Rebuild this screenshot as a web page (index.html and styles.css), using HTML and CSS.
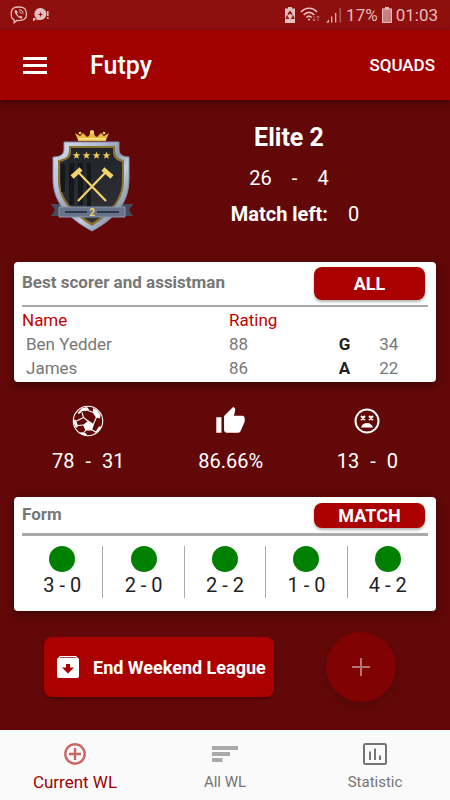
FILE: index.html
```html
<!DOCTYPE html>
<html lang="en">
<head>
    <meta charset="UTF-8">
    <meta name="viewport" content="width=device-width, initial-scale=1.0">
    <title>Futpy</title>
    <link rel="stylesheet" href="styles.css">
</head>
<body>
    <div class="statusbar">
        <div class="status-group">
            <svg width="18" height="18" viewBox="0 0 18 18" fill="none" stroke="currentColor" stroke-width="1.3">
                <path d="M9 1C4 1 1.2 2.2 1.2 8c0 3 .8 5 3 6v2.800l2.400-2.300C14 15 16.500 13 16.500 8 16.500 2.500 14 1 9 1z"/>
                <path d="M5 4.200c-1 1 0 3 1.500 5s4 4 5.500 3.200l.6-1.300-1.900-1.400-1 .9C8.500 10 7.200 8.500 7 7.500l.8-.9L6.300 4z" fill="currentColor" stroke="none"/>
                <path d="M9 3.800c2.800 0 4 1.500 4 4M9 5.800c1.500 0 2 .8 2 2" stroke-width="1"/>
            </svg>
            <svg width="18" height="18" viewBox="0 0 18 18" fill="currentColor">
                <path fill-rule="evenodd" d="M8.500 2a6 6 0 1 1 0 12H4.500v-1.500A6 6 0 0 1 8.500 2zM8 6.500V8H6.500v1H8v1.500h1V9h1.500V8H9V6.500z"/>
                <path d="M1 12h2.500v1.500L2 15H1zM15 5h1.600v5H15zM15 11.200h1.600V13H15z"/>
            </svg>
        </div>
        <div class="status-group">
            <svg width="12" height="16" viewBox="0 0 12 16">
                <path fill="currentColor" d="M4 0h4v1.500h3V16H1V1.500h3z"/>
                <path d="M4 7.500L6 4.800l2 2.700M8.700 8.500l1 2.800H7M5 11.300H2.500l1-2.800" fill="none" stroke="#8f0e0e" stroke-width="1.4"/>
            </svg>
            <svg width="22" height="16" viewBox="0 0 22 16" fill="none" stroke="currentColor">
                <path d="M1 5C5.500 0 12.500 0 17 5M3.700 8C7 4.500 11 4.500 14.300 8M6.300 10.500C8 8.800 10 8.800 11.700 10.500" stroke-width="1.700"/>
                <circle cx="9" cy="12.500" r="1.100" fill="currentColor" stroke="none"/>
                <path d="M14 9v5M12.500 12.500L14 14l1.500-1.500M18 14V9M16.500 10.500L18 9l1.500 1.500" opacity=".5"/>
            </svg>
            <svg width="16" height="16" viewBox="0 0 16 16" fill="currentColor">
                <path d="M0 15.500l3-3v3zM5 9.500h1.300v6H5zM9 6h1.300v9.500H9z"/>
                <path d="M13.500 1h1.300v14.500h-1.300z" opacity=".5"/>
            </svg>
            <span>17%</span>
            <svg width="10" height="16" viewBox="0 0 10 16" fill="currentColor">
                <path d="M3 0h4v2H3z"/>
                <path d="M0 1.500h10V16H0z" opacity=".65"/>
                <path d="M.5 2h9v13.500h-9z" fill="none" stroke="currentColor"/>
            </svg>
            <span>01:03</span>
        </div>
    </div>

    <header class="appbar">
        <button class="menu-btn" aria-label="Menu">
            <svg width="24" height="17" viewBox="0 0 24 17" fill="currentColor">
                <path d="M0 0h24v3H0zM0 7h24v3H0zM0 14h24v3H0z"/>
            </svg>
        </button>
        <h1>Futpy</h1>
        <a class="squads" href="#">SQUADS</a>
    </header>

    <main>
        <section class="hero">
            <svg class="badge" width="82" height="102" viewBox="0 0 82 102">
                <defs>
                    <linearGradient id="steel" x1="0" y1="0" x2="1" y2="1">
                        <stop offset="0" stop-color="#d6dfee"/>
                        <stop offset=".3" stop-color="#b4c0d6"/>
                        <stop offset=".5" stop-color="#8f9cb4"/>
                        <stop offset=".62" stop-color="#c3cee0"/>
                        <stop offset="1" stop-color="#5a677e"/>
                    </linearGradient>
                    <linearGradient id="dark" x1="0" y1="0" x2="0" y2="1">
                        <stop offset="0" stop-color="#20232a"/>
                        <stop offset="1" stop-color="#303236"/>
                    </linearGradient>
                    <linearGradient id="gold" x1="0" y1="0" x2="0" y2="1">
                        <stop offset="0" stop-color="#fff0a0"/>
                        <stop offset="1" stop-color="#dfb038"/>
                    </linearGradient>
                </defs>
                <path d="M0 74h11v12H0l4-6zM82 74H71v12h11l-4-6z" fill="#454d5c"/>
                <path d="M13 12h55v7c0 5 3 8 10 8v22c0 25-15 40-37 52C19 89 2 74 2 49V27c8 0 11-3 11-8z" fill="url(#steel)" stroke="#8290a8"/>
                <path d="M18 16h46v4c0 6 3 9 9 10v20c0 21-13 34-32 46C22 84 7 71 7 50V30c8-1 11-4 11-10z" fill="#8d7330"/>
                <path d="M20 18h42v4c0 6 3 8 9 10v18c0 20-12 32-30 43C23 82 9 70 9 50V32c8-2 11-5 11-10z" fill="url(#dark)"/>
                <path d="M9 33h62M10 34h4v28h-4zM18 33h5v42h-5zM27 33h5v42h-5zM36 33h4v46h-4z" fill="#15171d"/>
                <path d="M27 10L24 3l5 3 3-3 4 4 2-1 2-5h2l2 5 2 1 4-4 3 3 5-3-3 7z" fill="#e7ba45"/>
                <path d="M27 8h28v3H27z" fill="url(#gold)"/>
                <circle cx="41" cy="2" r="2" fill="#f8d866"/>
                <circle cx="29" cy="3" r="1.300" fill="#f8d866"/>
                <circle cx="53" cy="3" r="1.300" fill="#f8d866"/>
                <g fill="#efcd5c">
                    <path id="star" d="M25.500 21.500l1 2.700 2.800.1-2.200 1.800.8 2.700-2.400-1.600-2.400 1.600.8-2.700-2.200-1.800 2.800-.1z"/>
                    <use href="#star" x="10"/>
                    <use href="#star" x="20"/>
                    <use href="#star" x="30"/>
                </g>
                <g stroke="#f2d56c" fill="none">
                    <path d="M27 42l28 29M55 42L27 71" stroke-width="2.200"/>
                    <path d="M21 47l9-8M61 47l-9-8" stroke-width="4.500"/>
                </g>
                <path d="M8 77h66v10H8z" fill="#66738a" stroke="#8b98ac"/>
                <path d="M14 81h22v2H14zM46 81h22v2H46z" fill="#2f3746"/>
                <text class="badge-num" x="41" y="86" text-anchor="middle">2</text>
            </svg>
            <div class="hero-text">
                <h2>Elite 2</h2>
                <div class="score"><span>26</span><span>-</span><span>4</span></div>
                <div class="score match-left"><b>Match left:</b><span>0</span></div>
            </div>
        </section>

        <section class="card">
            <div class="card-head">
                <h3>Best scorer and assistman</h3>
                <button class="btn card-btn">ALL</button>
            </div>
            <table class="players">
                <thead>
                    <tr><th class="col-name">Name</th><th class="col-rating">Rating</th><th class="col-type"></th><th></th></tr>
                </thead>
                <tbody>
                    <tr><td class="player">Ben Yedder</td><td>88</td><td class="type">G</td><td>34</td></tr>
                    <tr><td class="player">James</td><td>86</td><td class="type">A</td><td>22</td></tr>
                </tbody>
            </table>
        </section>

        <section class="stats">
            <div class="stat">
                <svg width="32" height="32" viewBox="0 0 32 32">
                    <circle cx="16" cy="16" r="14.700" fill="none" stroke="currentColor" stroke-width="1.100"/>
                    <g fill="currentColor">
                        <path d="M16.500 15.500l5.500 3.700-2 6.300h-6.500l-2.500-5.500z"/>
                        <path d="M9.500 3.500L15 2l2 2.500-1 1.200-5.500.3-3.500 3-1.500-1zM21 3l4 2 3.500 5-.5 3.500-4-1-3-4.500z"/>
                        <path d="M1.500 14.500l2.500.5 2 6-1.500 2C2.500 21 1.500 18 1.500 14.500zM9 27l5 1.300 1 2c-3 0-5-1-7-2.300zM24 26l3-4.500h2c-1 3-3 5.500-6 7z"/>
                    </g>
                    <path d="M10 7.500l1.500 5 5 4M11.500 12.500L4.500 16M16 5.500l5.500 2M24.500 12l-3 7M5.500 20.500l6-.5M14 25l-2.500 3M20 25l4 2" fill="none" stroke="currentColor" stroke-width="1.100"/>
                </svg>
                <div class="stat-value"><span>78</span><span>-</span><span>31</span></div>
            </div>
            <div class="stat">
                <svg width="31" height="32" viewBox="0 0 24 24" fill="currentColor">
                    <path d="M1 21h4V9H1v12zm22-11c0-1.100-.9-2-2-2h-6.310l.95-4.570.03-.32c0-.41-.17-.79-.44-1.060L14.170 1 7.590 7.590C7.220 7.950 7 8.450 7 9v10c0 1.100.9 2 2 2h9c.83 0 1.540-.5 1.840-1.220l3.020-7.050c.09-.23.14-.47.14-.73v-2z"/>
                </svg>
                <div class="stat-value">86.66%</div>
            </div>
            <div class="stat">
                <svg width="32" height="32" viewBox="0 0 32 32" fill="none" stroke="currentColor">
                    <circle cx="16" cy="16" r="11.500" stroke-width="2"/>
                    <path d="M10 11l4 4M14 11l-4 4M18 11l4 4M22 11l-4 4" stroke-width="1.900"/>
                    <path d="M10 22.500c1-3 3-4.500 6-4.500s5 1.500 6 4.500z" fill="currentColor" stroke="none"/>
                </svg>
                <div class="stat-value"><span>13</span><span>-</span><span>0</span></div>
            </div>
        </section>

        <section class="card">
            <div class="card-head card-head-slim">
                <h3>Form</h3>
                <button class="btn card-btn">MATCH</button>
            </div>
            <ul class="form-list">
                <li><span class="dot"></span>3 - 0</li>
                <li><span class="dot"></span>2 - 0</li>
                <li><span class="dot"></span>2 - 2</li>
                <li><span class="dot"></span>1 - 0</li>
                <li><span class="dot"></span>4 - 2</li>
            </ul>
        </section>

        <div class="actions">
            <button class="btn end-btn">
                <svg width="24" height="24" viewBox="0 0 24 24">
                    <path fill="currentColor" fill-rule="evenodd" d="M4 1h16l3 3v17a2 2 0 0 1-2 2H3a2 2 0 0 1-2-2V4zM4.500 2.300L4 3h16l-.5-.7zM10 9v3.500H6l6 6 6-6h-4V9z"/>
                </svg>
                End Weekend League
            </button>
            <button class="add-btn" aria-label="Add" disabled>
                <svg width="18" height="18" viewBox="0 0 18 18"><path d="M9 0v18M0 9h18" stroke="currentColor" stroke-width="2"/></svg>
            </button>
        </div>
    </main>

    <nav class="tabs">
        <a class="tab active" href="#">
            <svg width="24" height="24" viewBox="0 0 24 24" fill="none" stroke="currentColor">
                <circle cx="12" cy="12" r="9.700" stroke-width="2.400"/>
                <path d="M12 6v12M6 12h12" stroke-width="2.400"/>
            </svg>
            Current WL
        </a>
        <a class="tab tab-all" href="#">
            <svg width="26" height="24" viewBox="0 0 26 24" fill="currentColor">
                <path d="M0 4h26v4H0zM0 10h18v4H0zM0 16h10.500v4H0z"/>
            </svg>
            All WL
        </a>
        <a class="tab" href="#">
            <svg width="24" height="24" viewBox="0 0 24 24" fill="none" stroke="currentColor" stroke-width="2">
                <rect x="1" y="2" width="22" height="20" rx="1.500"/>
                <path d="M7 9.500V18M12 6.500V18M17 13.500V18"/>
            </svg>
            Statistic
        </a>
    </nav>
</body>
</html>
```

FILE: styles.css
```css
* {
    box-sizing: border-box;
}

body {
    font-family: Roboto, "Liberation Sans", sans-serif;
    background-color: #620808;
    color: #fff;
    margin: 0;
    min-height: 100vh;
    display: flex;
    flex-direction: column;
}

h1, h2, h3 {
    margin: 0;
}

svg {
    display: block;
    flex-shrink: 0;
}

button {
    font-family: inherit;
    border: none;
    cursor: pointer;
}

a {
    text-decoration: none;
}

.statusbar {
    height: 30px;
    padding: 0 12px 0 10px;
    display: flex;
    justify-content: space-between;
    align-items: center;
    background-color: #8f0e0e;
    color: #e3bebe;
    font-size: 17px;
}

.status-group {
    display: flex;
    align-items: center;
    gap: 4px;
}

.appbar {
    height: 70px;
    padding: 0 15px 0 23px;
    display: flex;
    align-items: center;
    background-color: #a00000;
    box-shadow: 0 2px 6px rgba(0, 0, 0, 0.4);
}

.menu-btn {
    padding: 0;
    margin-right: 43px;
    background: none;
    color: #fff;
}

.appbar h1 {
    font-size: 25px;
    font-weight: 500;
}

.squads {
    margin-left: auto;
    color: #fff;
    font-size: 17px;
    font-weight: 500;
}

main {
    padding: 22px 14px 0;
}

.hero {
    display: flex;
    padding-left: 37px;
    padding-bottom: 30px;
}

.badge {
    margin-top: 8px;
}

.badge-num {
    font-size: 10px;
    font-weight: 700;
    fill: #f2d56c;
}

.hero-text {
    flex: 1;
    padding-left: 9px;
    display: flex;
    flex-direction: column;
    align-items: center;
    gap: 12px;
}

.hero h2 {
    font-size: 25px;
    line-height: 32px;
    font-weight: 700;
}

.score {
    display: flex;
    gap: 20px;
    font-size: 20px;
    line-height: 24px;
}

.match-left {
    padding-left: 12px;
}

.card {
    background-color: #fff;
    color: #222;
    border-radius: 4px;
    padding: 5px 8px 2px;
    box-shadow: 0 3px 10px rgba(0, 0, 0, 0.4);
}

.card-head {
    display: flex;
    justify-content: space-between;
    align-items: center;
    padding: 0 3px 5px 0;
    border-bottom: 2px solid #aaa;
}

.card-head h3 {
    padding-bottom: 3px;
    font-size: 17px;
    line-height: 20px;
    font-weight: 700;
    color: #777;
}

.btn {
    background-color: #aa0000;
    color: #fff;
    font-weight: 700;
    border-radius: 8px;
    box-shadow: 0 2px 3px rgba(0, 0, 0, 0.3);
}

.card-btn {
    width: 111px;
    height: 33px;
    padding: 0;
    font-size: 18px;
}

.card-head-slim {
    padding-top: 1px;
    border-bottom-width: 3px;
}

.card-head-slim .card-btn {
    height: 25px;
}

.players {
    width: 100%;
    margin-top: 1px;
    table-layout: fixed;
    border-collapse: collapse;
    font-size: 17px;
    line-height: 24px;
    color: #777;
}

.players th, .players td {
    padding: 0;
    text-align: left;
}

.players th {
    height: 24px;
    font-weight: 400;
    color: #c40000;
}

.col-name {
    width: 51%;
}

.col-rating {
    width: 27%;
}

.col-type {
    width: 10%;
}

.players .player {
    padding-left: 4px;
}

.players .type {
    font-weight: 700;
    color: #222;
}

.stats {
    display: flex;
    justify-content: space-between;
    padding: 23px 38px 24px;
}

.stat {
    display: flex;
    flex-direction: column;
    align-items: center;
    gap: 12px;
}

.stat-value {
    display: flex;
    gap: 11px;
    font-size: 20px;
    line-height: 24px;
}

.form-list {
    list-style: none;
    margin: 10px 0 11px;
    padding: 0;
    display: flex;
}

.form-list li {
    flex: 1;
    display: flex;
    flex-direction: column;
    align-items: center;
    font-size: 20px;
    line-height: 26px;
}

.form-list li + li {
    border-left: 1px solid #aaa;
}

.dot {
    width: 26px;
    height: 26px;
    border-radius: 50%;
    background-color: #008000;
}

.actions {
    display: flex;
    justify-content: space-between;
    align-items: center;
    padding: 21px 40px 20px 30px;
}

.end-btn {
    height: 60px;
    padding: 0 8px 0 12px;
    display: flex;
    align-items: center;
    gap: 13px;
    font-size: 18px;
}

.add-btn {
    width: 70px;
    height: 70px;
    padding: 0;
    display: flex;
    align-items: center;
    justify-content: center;
    border-radius: 50%;
    background-color: #800202;
    color: #b37474;
    box-shadow: 0 4px 8px rgba(0, 0, 0, 0.15);
}

.tabs {
    height: 70px;
    margin-top: auto;
    padding-top: 12px;
    display: flex;
    background-color: #fafafa;
}

.tab {
    flex: 1;
    display: flex;
    flex-direction: column;
    align-items: center;
    gap: 4px;
    font-size: 15px;
    line-height: 24px;
    color: #757575;
}

.tab.active {
    font-size: 17px;
    color: #a00000;
}

.tab.active svg {
    color: #cc6666;
}

.tab-all svg {
    color: #aaa;
}
```
